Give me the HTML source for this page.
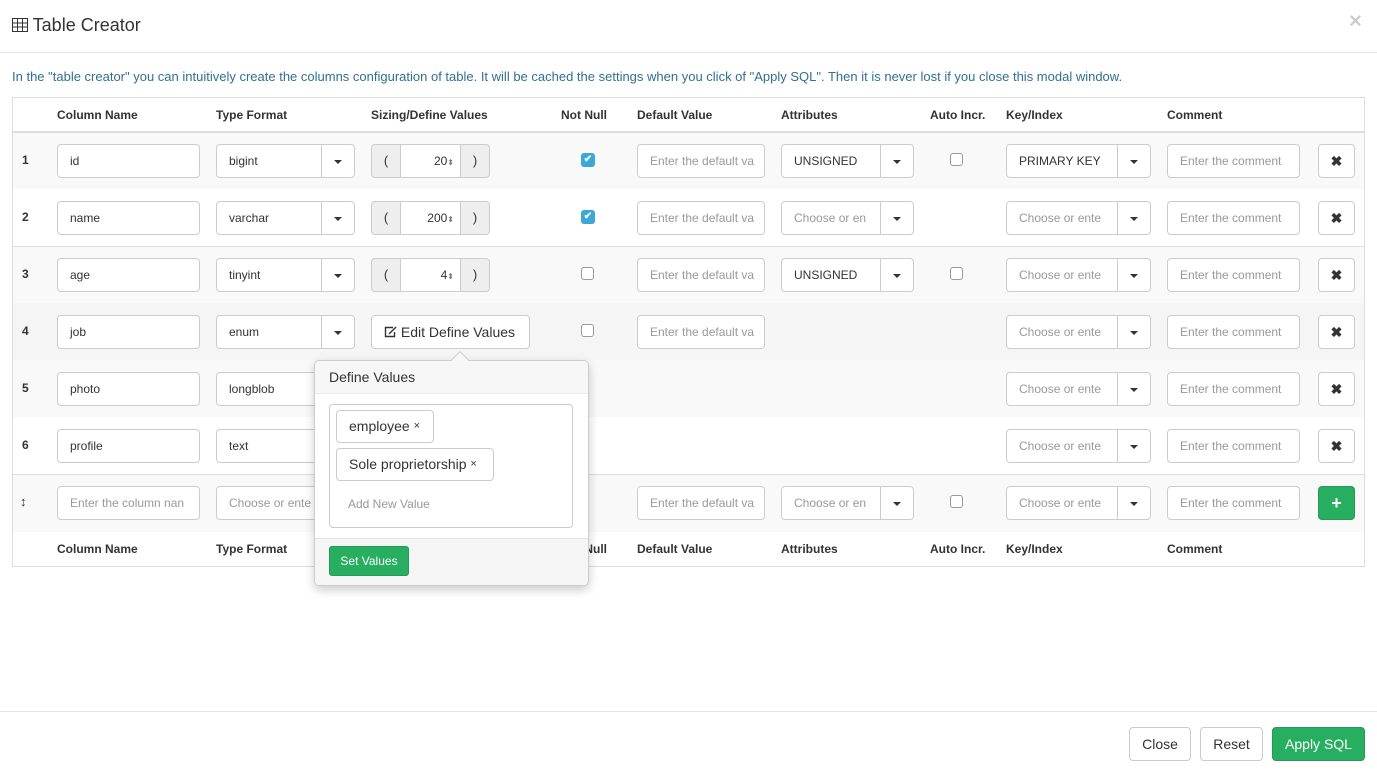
<!DOCTYPE html>
<html><head><meta charset="utf-8"><style>
*{box-sizing:border-box;margin:0;padding:0}
body{width:1377px;height:773px;background:#fff;font-family:"Liberation Sans",Arial,sans-serif;font-size:12px;color:#333;position:relative;overflow:hidden}
.a{position:absolute}
.inp{position:absolute;height:34px;border:1px solid #ccc;border-radius:4px;background:#fff;padding:0 12px;line-height:32px;white-space:nowrap;overflow:hidden;color:#333}
.ph{color:#999}
.btn{position:absolute;height:34px;border:1px solid #ccc;background:#fff;border-radius:0 4px 4px 0;width:34px}
.btn:after{content:"";position:absolute;left:12px;top:15px;border-left:4px solid transparent;border-right:4px solid transparent;border-top:4px solid #333}
.sel{border-radius:4px 0 0 4px}
.th{position:absolute;font-weight:bold;font-size:12px;color:#333}
.num{position:absolute;left:22px;font-weight:bold}
.cb{position:absolute;width:13px;height:13px;border:1px solid #999;border-radius:3px;background:#fff}
.cbc{position:absolute;width:14px;height:14px;border-radius:3px;background:#3aa9d8;color:#fff;font-size:10px;text-align:center;line-height:14px;font-weight:bold}
.del{position:absolute;width:37px;height:34px;border:1px solid #ccc;border-radius:4px;background:#fff;text-align:center;line-height:32px;font-weight:bold;font-size:14px}
.ad{position:absolute;width:30px;height:34px;background:#eee;border:1px solid #ccc;text-align:center;line-height:32px;font-size:13px}
</style></head><body>
<div class="a" style="left:12px;top:15px;font-size:18px;color:#333">
<svg width="16" height="14" viewBox="0 0 16 14" style="vertical-align:-1px"><rect x="0.5" y="0.5" width="15" height="13" fill="none" stroke="#333"/><path d="M0 5H16M0 9H16M5.5 0V14M10.5 0V14" stroke="#333"/></svg> Table Creator</div>
<div class="a" style="left:1349px;top:8px;font-size:22px;color:#ccc;font-weight:bold">×</div>
<div class="a" style="left:0;top:52px;width:1377px;height:1px;background:#e5e5e5"></div>
<div class="a" style="left:12px;top:69px;color:#31708f;font-size:13px;white-space:nowrap">In the "table creator" you can intuitively create the columns configuration of table. It will be cached the settings when you click of "Apply SQL". Then it is never lost if you close this modal window.</div>

<div class="a" style="left:12px;top:97px;width:1353px;height:470px;border:1px solid #ddd"></div>
<div class="a" style="left:13px;top:131px;width:1351px;height:2px;background:#ddd"></div>
<div class="a" style="left:13px;top:133px;width:1351px;height:56px;background:#f9f9f9"></div>
<div class="a" style="left:13px;top:246px;width:1351px;height:1px;background:#ddd"></div>
<div class="a" style="left:13px;top:247px;width:1351px;height:56px;background:#f9f9f9"></div>
<div class="a" style="left:13px;top:303px;width:1351px;height:57px;background:#f5f5f5"></div>
<div class="a" style="left:13px;top:360px;width:1351px;height:57px;background:#f9f9f9"></div>
<div class="a" style="left:13px;top:474px;width:1351px;height:1px;background:#ddd"></div>
<div class="a" style="left:13px;top:475px;width:1351px;height:57px;background:#f9f9f9"></div>

<div class="th" style="left:57px;top:108px">Column Name</div><div class="th" style="left:216px;top:108px">Type Format</div><div class="th" style="left:371px;top:108px">Sizing/Define Values</div><div class="th" style="left:561px;top:108px">Not Null</div><div class="th" style="left:637px;top:108px">Default Value</div><div class="th" style="left:781px;top:108px">Attributes</div><div class="th" style="left:930px;top:108px">Auto Incr.</div><div class="th" style="left:1006px;top:108px">Key/Index</div><div class="th" style="left:1167px;top:108px">Comment</div>

<div class="th" style="left:57px;top:542px">Column Name</div><div class="th" style="left:216px;top:542px">Type Format</div><div class="th" style="left:561px;top:542px">Not Null</div><div class="th" style="left:637px;top:542px">Default Value</div><div class="th" style="left:781px;top:542px">Attributes</div><div class="th" style="left:930px;top:542px">Auto Incr.</div><div class="th" style="left:1006px;top:542px">Key/Index</div><div class="th" style="left:1167px;top:542px">Comment</div>

<div class="num" style="top:153px">1</div>
<div class="inp" style="left:57px;top:144px;width:143px">id</div>
<div class="inp sel" style="left:216px;top:144px;width:106px">bigint</div><div class="btn" style="left:321px;top:144px"></div>
<div class="ad" style="left:371px;top:144px;border-radius:4px 0 0 4px">(</div><div class="inp" style="left:400px;top:144px;width:61px;border-radius:0;text-align:right;padding:0 6px">20<span style="font-size:8px;color:#777">⬍</span></div><div class="ad" style="left:460px;top:144px;border-radius:0 4px 4px 0">)</div>
<div class="cbc" style="left:581px;top:153px">✔</div>
<div class="inp ph" style="left:637px;top:144px;width:128px">Enter the default va</div>
<div class="inp sel" style="left:781px;top:144px;width:100px">UNSIGNED</div><div class="btn" style="left:880px;top:144px"></div>
<div class="cb" style="left:950px;top:153px"></div>
<div class="inp sel" style="left:1006px;top:144px;width:112px">PRIMARY KEY</div><div class="btn" style="left:1117px;top:144px"></div>
<div class="inp ph" style="left:1167px;top:144px;width:133px">Enter the comment</div>
<div class="del" style="left:1318px;top:144px">✖</div>

<div class="num" style="top:210px">2</div>
<div class="inp" style="left:57px;top:201px;width:143px">name</div>
<div class="inp sel" style="left:216px;top:201px;width:106px">varchar</div><div class="btn" style="left:321px;top:201px"></div>
<div class="ad" style="left:371px;top:201px;border-radius:4px 0 0 4px">(</div><div class="inp" style="left:400px;top:201px;width:61px;border-radius:0;text-align:right;padding:0 6px">200<span style="font-size:8px;color:#777">⬍</span></div><div class="ad" style="left:460px;top:201px;border-radius:0 4px 4px 0">)</div>
<div class="cbc" style="left:581px;top:210px">✔</div>
<div class="inp ph" style="left:637px;top:201px;width:128px">Enter the default va</div>
<div class="inp sel ph" style="left:781px;top:201px;width:100px">Choose or en</div><div class="btn" style="left:880px;top:201px"></div>
<div class="inp sel ph" style="left:1006px;top:201px;width:112px">Choose or ente</div><div class="btn" style="left:1117px;top:201px"></div>
<div class="inp ph" style="left:1167px;top:201px;width:133px">Enter the comment</div>
<div class="del" style="left:1318px;top:201px">✖</div>

<div class="num" style="top:267px">3</div>
<div class="inp" style="left:57px;top:258px;width:143px">age</div>
<div class="inp sel" style="left:216px;top:258px;width:106px">tinyint</div><div class="btn" style="left:321px;top:258px"></div>
<div class="ad" style="left:371px;top:258px;border-radius:4px 0 0 4px">(</div><div class="inp" style="left:400px;top:258px;width:61px;border-radius:0;text-align:right;padding:0 6px">4<span style="font-size:8px;color:#777">⬍</span></div><div class="ad" style="left:460px;top:258px;border-radius:0 4px 4px 0">)</div>
<div class="cb" style="left:581px;top:267px"></div>
<div class="inp ph" style="left:637px;top:258px;width:128px">Enter the default va</div>
<div class="inp sel" style="left:781px;top:258px;width:100px">UNSIGNED</div><div class="btn" style="left:880px;top:258px"></div>
<div class="cb" style="left:950px;top:267px"></div>
<div class="inp sel ph" style="left:1006px;top:258px;width:112px">Choose or ente</div><div class="btn" style="left:1117px;top:258px"></div>
<div class="inp ph" style="left:1167px;top:258px;width:133px">Enter the comment</div>
<div class="del" style="left:1318px;top:258px">✖</div>

<div class="num" style="top:324px">4</div>
<div class="inp" style="left:57px;top:315px;width:143px">job</div>
<div class="inp sel" style="left:216px;top:315px;width:106px">enum</div><div class="btn" style="left:321px;top:315px"></div>
<div class="inp" style="left:371px;top:315px;width:159px;font-size:14px;padding:0 12px">
<svg width="13" height="12" viewBox="0 0 13 12" style="vertical-align:-1px"><path d="M9 1.5H1.5V10.5H10.5V6" fill="none" stroke="#333" stroke-width="1.4"/><path d="M11.5 0.5L5 7L4.5 8.5L6 8L12.5 1.5Z" fill="#333"/></svg> Edit Define Values</div>
<div class="cb" style="left:581px;top:324px"></div>
<div class="inp ph" style="left:637px;top:315px;width:128px">Enter the default va</div>
<div class="inp sel ph" style="left:1006px;top:315px;width:112px">Choose or ente</div><div class="btn" style="left:1117px;top:315px"></div>
<div class="inp ph" style="left:1167px;top:315px;width:133px">Enter the comment</div>
<div class="del" style="left:1318px;top:315px">✖</div>

<div class="num" style="top:381px">5</div>
<div class="inp" style="left:57px;top:372px;width:143px">photo</div>
<div class="inp sel" style="left:216px;top:372px;width:106px">longblob</div>
<div class="inp sel ph" style="left:1006px;top:372px;width:112px">Choose or ente</div><div class="btn" style="left:1117px;top:372px"></div>
<div class="inp ph" style="left:1167px;top:372px;width:133px">Enter the comment</div>
<div class="del" style="left:1318px;top:372px">✖</div>

<div class="num" style="top:438px">6</div>
<div class="inp" style="left:57px;top:429px;width:143px">profile</div>
<div class="inp sel" style="left:216px;top:429px;width:106px">text</div>
<div class="inp sel ph" style="left:1006px;top:429px;width:112px">Choose or ente</div><div class="btn" style="left:1117px;top:429px"></div>
<div class="inp ph" style="left:1167px;top:429px;width:133px">Enter the comment</div>
<div class="del" style="left:1318px;top:429px">✖</div>

<div class="num" style="top:494px;left:20px;font-size:13px">↕</div>
<div class="inp ph" style="left:57px;top:486px;width:143px">Enter the column nan</div>
<div class="inp sel ph" style="left:216px;top:486px;width:106px">Choose or ente</div>
<div class="inp ph" style="left:637px;top:486px;width:128px">Enter the default va</div>
<div class="inp sel ph" style="left:781px;top:486px;width:100px">Choose or en</div><div class="btn" style="left:880px;top:486px"></div>
<div class="cb" style="left:950px;top:495px"></div>
<div class="inp sel ph" style="left:1006px;top:486px;width:112px">Choose or ente</div><div class="btn" style="left:1117px;top:486px"></div>
<div class="inp ph" style="left:1167px;top:486px;width:133px">Enter the comment</div>
<div class="del" style="left:1318px;top:486px;background:#27ae60;border-color:#239a55;color:#fff;font-size:18px">+</div>

<div class="a" style="left:314px;top:360px;width:275px;height:226px;background:#fff;border:1px solid #ccc;border-radius:5px;box-shadow:0 4px 10px rgba(0,0,0,.2);overflow:hidden">
<div class="a" style="left:0;top:0;width:273px;height:33px;background:#f7f7f7;border-bottom:1px solid #ebebeb;padding:8px 14px;font-size:14px">Define Values</div>
<div class="a" style="left:14px;top:43px;width:244px;height:124px;border:1px solid #ccc;border-radius:4px"></div>
<div class="a" style="left:21px;top:49px;width:98px;height:33px;border:1px solid #ccc;border-radius:4px;padding:0 12px;line-height:31px;font-size:14px">employee <span style="font-size:11px;vertical-align:2px">×</span></div>
<div class="a" style="left:21px;top:87px;width:158px;height:33px;border:1px solid #ccc;border-radius:4px;padding:0 12px;line-height:31px;font-size:14px">Sole proprietorship <span style="font-size:11px;vertical-align:2px">×</span></div>
<div class="a" style="left:33px;top:136px;color:#999;font-size:12px">Add New Value</div>
<div class="a" style="left:0;top:177px;width:273px;height:48px;background:#f5f5f5;border-top:1px solid #e5e5e5"></div>
<div class="a" style="left:14px;top:185px;width:80px;height:30px;background:#27ae60;border:1px solid #239a55;border-radius:3px;color:#fff;text-align:center;line-height:28px;font-size:12px">Set Values</div>
</div>
<div class="a" style="left:450px;top:351px;border-left:10px solid transparent;border-right:10px solid transparent;border-bottom:10px solid #bbb"></div>
<div class="a" style="left:451px;top:352px;border-left:9px solid transparent;border-right:9px solid transparent;border-bottom:9px solid #f7f7f7"></div>

<div class="a" style="left:0;top:711px;width:1377px;height:1px;background:#e5e5e5"></div>
<div class="a" style="left:1129px;top:727px;width:62px;height:34px;border:1px solid #ccc;border-radius:4px;text-align:center;line-height:32px;font-size:14px">Close</div>
<div class="a" style="left:1200px;top:727px;width:63px;height:34px;border:1px solid #ccc;border-radius:4px;text-align:center;line-height:32px;font-size:14px">Reset</div>
<div class="a" style="left:1272px;top:727px;width:93px;height:34px;background:#27ae60;border:1px solid #239a55;border-radius:4px;text-align:center;line-height:32px;font-size:14px;color:#fff">Apply SQL</div>
</body></html>
